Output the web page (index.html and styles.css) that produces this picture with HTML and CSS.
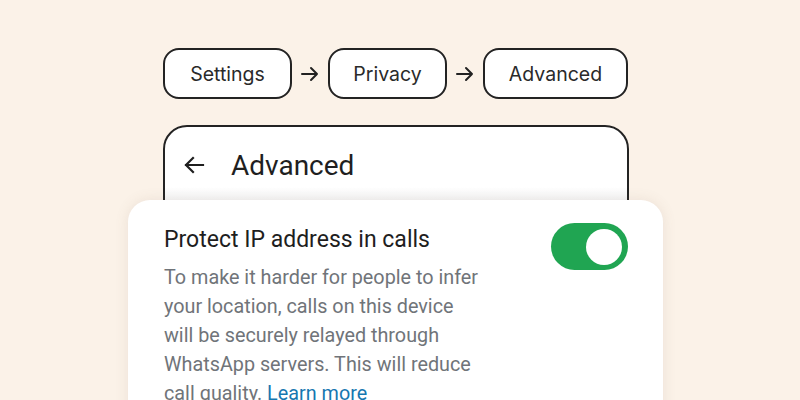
FILE: index.html
```html
<!DOCTYPE html>
<html>
<head>
<meta charset="utf-8">
<link rel="stylesheet" href="styles.css">
</head>
<body>
<main class="stage">
  <nav class="crumbs">
    <span class="pill pill-settings">Settings</span>
    <svg class="arrow" viewBox="0 0 20 20" width="20" height="20"><path d="M2 10h15M11 4l6 6-6 6" fill="none" stroke="#222" stroke-width="2" stroke-linecap="round" stroke-linejoin="round"/></svg>
    <span class="pill pill-privacy">Privacy</span>
    <svg class="arrow" viewBox="0 0 20 20" width="20" height="20"><path d="M2 10h15M11 4l6 6-6 6" fill="none" stroke="#222" stroke-width="2" stroke-linecap="round" stroke-linejoin="round"/></svg>
    <span class="pill pill-advanced">Advanced</span>
  </nav>
  <section class="screen">
    <div class="appbar">
      <svg class="back" viewBox="0 0 24 24" width="24" height="24"><path d="M21 12H4M11 5l-7 7 7 7" fill="none" stroke="#1f1f1f" stroke-width="2.2" stroke-linecap="square" stroke-linejoin="miter"/></svg>
      <h1 class="title">Advanced</h1>
    </div>
  </section>
  <section class="setting">
    <div class="setting-text">
      <h2 class="setting-title">Protect IP address in calls</h2>
      <p class="setting-desc">To make it harder for people to infer<br>your location, calls on this device<br>will be securely relayed through<br>WhatsApp servers. This will reduce<br>call quality. <a class="link" href="#">Learn more</a></p>
    </div>
    <div class="toggle"><span class="knob"></span></div>
  </section>
</main>
</body>
</html>
```
FILE: styles.css
```css
* { box-sizing: border-box; }
html, body { margin: 0; padding: 0; }
body {
  width: 800px;
  height: 400px;
  overflow: hidden;
  background: #fbf2e8;
  font-family: Roboto, "Noto Sans", sans-serif;
}
.stage {
  width: 466px;
  margin-left: 163px;
  padding-top: 48px;
}
.crumbs {
  display: flex;
  align-items: center;
}
.pill {
  height: 51px;
  border: 2px solid #232323;
  border-radius: 16px;
  background: #fff;
  display: flex;
  align-items: center;
  justify-content: center;
  font-family: Inter, Roboto, sans-serif;
  font-size: 19.5px;
  color: #2a2a2a;
}
.pill-settings { width: 129px; }
.pill-privacy { width: 119px; }
.pill-advanced { width: 145px; }
.arrow { margin: 0 8px; width: 20px; height: 20px; }
.screen {
  margin-top: 26px;
  height: 110px;
  border: 2px solid #232323;
  border-radius: 24px;
  background: linear-gradient(#fff 0, #fff 60px, #f3f3f3 75px);
}
.appbar {
  display: flex;
  align-items: center;
  height: 76px;
  padding-left: 17px;
}
.back { width: 24px; height: 24px; }
.title {
  margin: 0 0 0 25px;
  font-weight: 400;
  font-size: 28px;
  color: #1f1f1f;
}
.setting {
  position: relative;
  margin: -35px -34px 0 -35px;
  height: 240px;
  background: #fff;
  border-radius: 22px;
  box-shadow: 0 0 14px rgba(120, 100, 80, 0.12);
  display: flex;
  justify-content: space-between;
  padding: 25px 35px 0 36px;
}
.setting-text { width: 345px; }
.setting-title {
  margin: 0;
  font-weight: 400;
  font-size: 23px;
  line-height: 30px;
  color: #1e1e1e;
}
.setting-desc {
  margin: 8px 0 0;
  font-size: 19.8px;
  line-height: 29px;
  color: #707479;
}
.link { color: #1677b0; text-decoration: none; }
.toggle {
  margin-top: -2px;
  width: 77px;
  height: 47px;
  border-radius: 24px;
  background: #20a552;
  display: flex;
  align-items: center;
  justify-content: flex-end;
  padding-right: 6px;
}
.knob {
  width: 36px;
  height: 36px;
  border-radius: 50%;
  background: #fff;
}
```
